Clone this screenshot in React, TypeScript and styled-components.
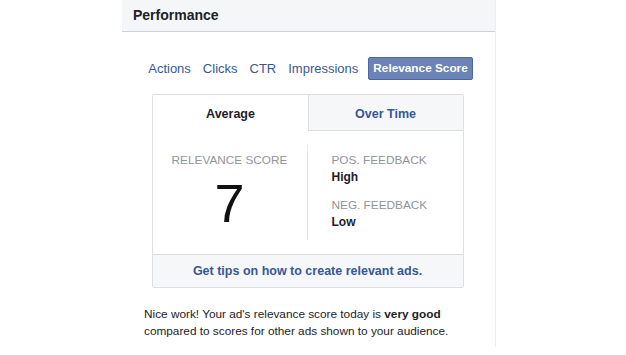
import styled, { createGlobalStyle } from 'styled-components'

const Global = createGlobalStyle`
  body {
    margin: 0;
    background: #fff;
    font-family: "Liberation Sans", Arial, sans-serif;
    color: #1d2129;
  }
`

const metrics = ['Actions', 'Clicks', 'CTR', 'Impressions', 'Relevance Score']

const App = () => {
  return (
    <>
      <Global />
      <Panel>
        <Header>Performance</Header>
        <Body>
          <MetricTabs>
            {metrics.map((m, i) => (
              <Metric key={m} active={i === metrics.length - 1}>
                {m}
              </Metric>
            ))}
          </MetricTabs>
          <Card>
            <CardTabs>
              <CardTab active>Average</CardTab>
              <CardTab>Over Time</CardTab>
            </CardTabs>
            <CardBody>
              <ScoreCol>
                <Label>Relevance Score</Label>
                <Score>7</Score>
              </ScoreCol>
              <FeedbackCol>
                <Label>Pos. Feedback</Label>
                <Value>High</Value>
                <Label style={{ marginTop: 11 }}>Neg. Feedback</Label>
                <Value>Low</Value>
              </FeedbackCol>
            </CardBody>
            <CardFooter>Get tips on how to create relevant ads.</CardFooter>
          </Card>
          <Note>
            Nice work! Your ad's relevance score today is <b>very good</b>
            <br />
            compared to scores for other ads shown to your audience.
          </Note>
        </Body>
      </Panel>
    </>
  )
}

export default App

const Panel = styled.div`
  margin-left: 122px;
  width: 373px;
  height: 347px;
  border-right: 1px solid #eceef1;
`

const Header = styled.div`
  height: 29px;
  padding-bottom: 2px;
  background: #f5f6f7;
  border-bottom: 1px solid #cdd0d4;
  padding-left: 11px;
  display: flex;
  align-items: center;
  font-size: 14px;
  font-weight: bold;
  color: #1d2129;
`

const Body = styled.div`
  display: flex;
  flex-direction: column;
  align-items: center;
  padding-top: 25px;
`

const MetricTabs = styled.div`
  display: flex;
  align-items: center;
  gap: 8px;
  height: 23px;
  margin-left: 2px;
`

const Metric = styled.div<{ active?: boolean }>`
  padding: 0 ${(p) => (p.active ? '4px' : '1px')};
  height: 21px;
  line-height: 21px;
  border-radius: 2px;
  color: ${(p) => (p.active ? '#fff' : '#365899')};
  background: ${(p) => (p.active ? '#6b83b5' : 'transparent')};
  border: 1px solid ${(p) => (p.active ? '#4c67a1' : 'transparent')};
  font-weight: ${(p) => (p.active ? 'bold' : 'normal')};
  font-size: ${(p) => (p.active ? '11.8px' : '13px')};
`

const Card = styled.div`
  margin-top: 14px;
  width: 310px;
  border: 1px solid #dddfe2;
  border-radius: 2px;
  margin-left: -2px;
`

const CardTabs = styled.div`
  display: flex;
  height: 36px;
`

const CardTab = styled.div<{ active?: boolean }>`
  flex: 1;
  display: flex;
  align-items: center;
  justify-content: center;
  padding-top: 3px;
  font-size: 12.5px;
  font-weight: bold;
  color: ${(p) => (p.active ? '#1d2129' : '#365899')};
  background: ${(p) => (p.active ? '#fff' : '#f6f7f9')};
  border-bottom: 1px solid ${(p) => (p.active ? 'transparent' : '#dddfe2')};
  border-left: 1px solid ${(p) => (p.active ? 'transparent' : '#dddfe2')};
`

const CardBody = styled.div`
  display: flex;
  padding: 14px 0 14px;
  height: 95px;
`

const ScoreCol = styled.div`
  width: 50%;
  box-sizing: border-box;
  display: flex;
  flex-direction: column;
  align-items: center;
  padding-top: 7px;
  border-right: 1px solid #e4e6e9;
`

const FeedbackCol = styled.div`
  width: 50%;
  box-sizing: border-box;
  padding: 7px 0 0 24px;
`

const Label = styled.div`
  font-size: 11.8px;
  line-height: 17px;
  color: #90949c;
  text-transform: uppercase;
`

const Score = styled.div`
  font-size: 54px;
  line-height: 54px;
  margin-top: 7px;
  color: #111;
`

const Value = styled.div`
  font-size: 12px;
  line-height: 17px;
  font-weight: bold;
  color: #1d2129;
`

const CardFooter = styled.div`
  height: 32px;
  border-top: 1px solid #dddfe2;
  background: #f6f7f9;
  display: flex;
  align-items: center;
  justify-content: center;
  font-size: 12.5px;
  font-weight: bold;
  color: #365899;
`

const Note = styled.div`
  align-self: flex-start;
  margin: 18px 0 0 22px;
  font-size: 11.8px;
  line-height: 17px;
  color: #1d2129;

  b {
    font-weight: bold;
  }
`
